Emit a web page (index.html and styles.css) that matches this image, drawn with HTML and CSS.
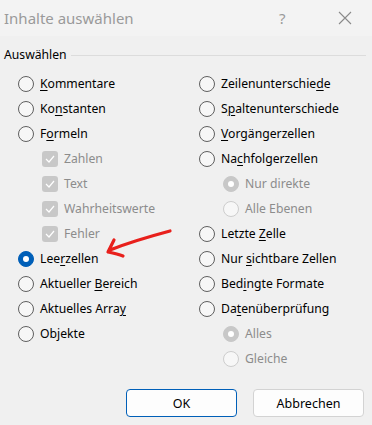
FILE: index.html
```html
<!DOCTYPE html>
<html lang="de">
<head>
<meta charset="utf-8">
<link rel="stylesheet" href="styles.css">
</head>
<body>
<div class="dialog">
  <div class="titlebar">
    <span class="title">Inhalte auswählen</span>
    <span class="help">?</span>
    <svg class="close" width="14" height="14" viewBox="0 0 14 14"><path d="M1 1L13 13M13 1L1 13" stroke="#8a8a8a" stroke-width="1.1" fill="none"/></svg>
  </div>
  <div class="content">
    <div class="group-head"><span>Auswählen</span><div class="rule"></div></div>
    <div class="cols">
      <div class="col">
        <div class="row"><span class="radio"></span><span><u>K</u>ommentare</span></div>
        <div class="row"><span class="radio"></span><span>Ko<u>n</u>stanten</span></div>
        <div class="row"><span class="radio"></span><span>F<u>o</u>rmeln</span></div>
        <div class="row sub dis"><span class="check"><svg width="10" height="8" viewBox="0 0 10 8"><path d="M1 4L4 7L9 1" stroke="#fff" stroke-width="1.2" fill="none"/></svg></span><span>Zahlen</span></div>
        <div class="row sub dis"><span class="check"><svg width="10" height="8" viewBox="0 0 10 8"><path d="M1 4L4 7L9 1" stroke="#fff" stroke-width="1.2" fill="none"/></svg></span><span>Text</span></div>
        <div class="row sub dis"><span class="check"><svg width="10" height="8" viewBox="0 0 10 8"><path d="M1 4L4 7L9 1" stroke="#fff" stroke-width="1.2" fill="none"/></svg></span><span>Wahrheitswerte</span></div>
        <div class="row sub dis"><span class="check"><svg width="10" height="8" viewBox="0 0 10 8"><path d="M1 4L4 7L9 1" stroke="#fff" stroke-width="1.2" fill="none"/></svg></span><span>Fehler</span></div>
        <div class="row"><span class="radio on"></span><span>Lee<u>r</u>zellen</span></div>
        <div class="row"><span class="radio"></span><span>Aktueller <u>B</u>ereich</span></div>
        <div class="row"><span class="radio"></span><span>Aktuelles Arra<u>y</u></span></div>
        <div class="row"><span class="radio"></span><span>Objekte</span></div>
      </div>
      <div class="col">
        <div class="row"><span class="radio"></span><span>Zeilenunterschie<u>d</u>e</span></div>
        <div class="row"><span class="radio"></span><span>S<u>p</u>altenunterschiede</span></div>
        <div class="row"><span class="radio"></span><span><u>V</u>orgängerzellen</span></div>
        <div class="row"><span class="radio"></span><span>Na<u>c</u>hfolgerzellen</span></div>
        <div class="row sub dis"><span class="radio dison"></span><span>Nur direkte</span></div>
        <div class="row sub dis"><span class="radio disoff"></span><span>Alle Ebenen</span></div>
        <div class="row"><span class="radio"></span><span>Letzte <u>Z</u>elle</span></div>
        <div class="row"><span class="radio"></span><span>Nur <u>s</u>ichtbare Zellen</span></div>
        <div class="row"><span class="radio"></span><span>Bed<u>i</u>ngte Formate</span></div>
        <div class="row"><span class="radio"></span><span>Da<u>t</u>enüberprüfung</span></div>
        <div class="row sub dis"><span class="radio dison"></span><span>Alles</span></div>
        <div class="row sub dis"><span class="radio disoff"></span><span>Gleiche</span></div>
      </div>
    </div>
    <div class="buttons">
      <button class="btn primary">OK</button>
      <button class="btn">Abbrechen</button>
    </div>
  </div>
  <svg class="arrow" width="80" height="40" viewBox="0 0 80 40"><path d="M70 9 C55 13 30 20 10 28 M14 18 C12 22 10 26 8 30 C13 31 18 32 23 34" stroke="#e8201c" stroke-width="3.2" fill="none" stroke-linecap="round" stroke-linejoin="round"/></svg>
</div>
</body>
</html>
```

FILE: styles.css
```css
* { box-sizing: border-box; }
html, body { margin: 0; padding: 0; }
body {
  background: #f0f0f0;
  font-family: "Noto Sans", "Open Sans", sans-serif;
  font-size: 12.2px;
  color: #000;
  width: 372px;
  height: 425px;
  overflow: hidden;
}
.dialog { position: relative; width: 372px; height: 425px; }
.titlebar {
  height: 36px;
  background: #f3f3f3;
  display: flex;
  align-items: center;
  padding-left: 4px;
}
.title { color: #9a9a9a; font-size: 15px; flex: 1; }
.help { color: #9a9a9a; font-size: 15px; width: 20px; margin-right: 39px; }
.close { margin-right: 20px; }
.content { padding: 10px 6px 0 4px; }
.group-head { display: flex; align-items: center; height: 17px; }
.group-head .rule { flex: 1; height: 1px; background: #dcdcdc; margin-left: 4px; margin-top: 1px; }
.cols { display: grid; grid-template-columns: 181px 1fr; padding-left: 14px; padding-top: 8px; }
.row { display: flex; align-items: center; height: 25px; gap: 6px; white-space: nowrap; }
.row.sub { padding-left: 24px; }
.row.dis { color: #8c8c8c; }
.radio {
  width: 16px; height: 16px; border-radius: 50%;
  border: 1px solid #5f5f5f;
  background: #f7f7f7;
  flex: none;
  position: relative;
}
.radio.on { background: #005fb8; border-color: #005fb8; }
.radio.on::after, .radio.dison::after {
  content: ""; position: absolute; left: 4px; top: 4px; width: 6px; height: 6px; border-radius: 50%; background: #fff;
}
.radio.dison { background: #c8c8c8; border-color: #c8c8c8; }
.radio.disoff { border-color: #cdcdcd; background: #f7f7f7; }
.check {
  width: 16px; height: 16px; border-radius: 3px; background: #c8c8c8; flex: none;
  display: flex; align-items: center; justify-content: center;
}
u { text-decoration-thickness: 1px; text-underline-offset: 2px; }
.buttons { display: flex; justify-content: flex-end; gap: 16px; padding-right: 2px; margin-top: 18px; }
.btn {
  width: 111px; height: 28px; border: 1px solid #d3d3d3; border-radius: 4px; background: #fdfdfd;
  font-family: inherit; font-size: 12.5px; color: #000; padding: 0;
}
.btn.primary { border-color: #005fb8; }
.arrow { position: absolute; left: 100px; top: 222px; }
```
